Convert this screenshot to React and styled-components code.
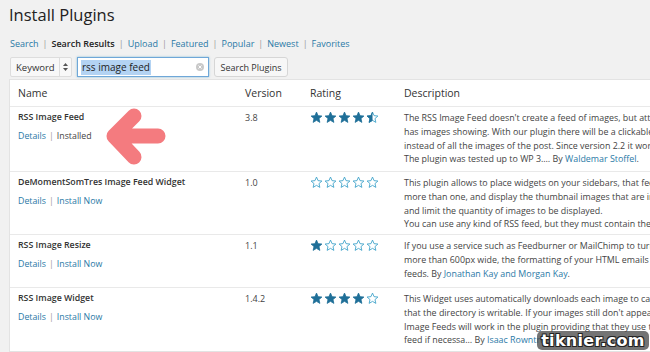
import React from "react";
import styled, { createGlobalStyle } from "styled-components";

const GlobalStyle = createGlobalStyle`
  html, body {
    margin: 0;
    padding: 0;
    background: #f1f1f1;
    overflow: hidden;
  }
  body {
    font-family: "Open Sans", "Liberation Sans", sans-serif;
    color: #444;
  }
`;

const Page = styled.div`
  position: relative;
  width: 650px;
  height: 352px;
  overflow: hidden;
  padding-left: 9px;
  box-sizing: border-box;
`;

const Title = styled.h2`
  margin: 0;
  padding-top: 3px;
  font-size: 16.5px;
  font-weight: 400;
  line-height: 24px;
  color: #222;
`;

const Nav = styled.div`
  display: flex;
  align-items: center;
  margin-top: 10px;
  padding-left: 1px;
  font-size: 9px;
  line-height: 14px;
  white-space: nowrap;
`;

const NavLink = styled.a`
  color: ${(p) => (p.$current ? "#222" : "#2a79a6")};
  font-weight: ${(p) => (p.$current ? 600 : 400)};
  text-decoration: none;
`;

const Sep = styled.span`
  color: #999;
  margin: 0 ${(p) => p.$gap || 4}px;
`;

const SearchRow = styled.div`
  display: flex;
  align-items: center;
  gap: 5px;
  margin-top: 6px;
  padding-left: 1px;
  height: 20px;
`;

const SelectBox = styled.div`
  display: flex;
  align-items: stretch;
  width: 62px;
  height: 20px;
  box-sizing: border-box;
  background: #f8f8f8;
  border: 1px solid #ddd;
  border-radius: 2px;
  font-size: 9.5px;
  color: #333;
`;

const SelectLabel = styled.span`
  flex: 1;
  display: flex;
  align-items: center;
  padding-left: 5px;
`;

const SelectArrows = styled.span`
  width: 11px;
  border-left: 1px solid #ddd;
  display: flex;
  align-items: center;
  justify-content: center;
`;

const InputBox = styled.div`
  display: flex;
  align-items: center;
  width: 132px;
  height: 20px;
  box-sizing: border-box;
  background: #fff;
  border: 1px solid #6fa7d8;
  box-shadow: 0 0 2px rgba(30, 140, 190, 0.5);
  padding: 0 4px 0 3px;
  font-size: 10px;
  color: #222;
`;

const Selected = styled.span`
  background: #b3d3f3;
  padding: 1px 1px;
  line-height: 13px;
`;

const Clear = styled.span`
  margin-left: auto;
  width: 8px;
  height: 8px;
  border-radius: 50%;
  background: #c9c9c9;
  display: flex;
  align-items: center;
  justify-content: center;
`;

const Button = styled.button`
  height: 20px;
  width: 74px;
  padding: 0;
  box-sizing: border-box;
  background: #f7f7f7;
  border: 1px solid #d6d6d6;
  border-radius: 3px;
  font-family: inherit;
  font-size: 9px;
  color: #333;
`;

const Table = styled.div`
  margin-top: 2px;
  width: 720px;
  background: #fff;
  border: 1px solid #e3e3e3;
  border-right: none;
`;

const Row = styled.div`
  position: relative;
  display: grid;
  grid-template-columns: 227px 65px 94px 1fr;
  border-top: ${(p) => (p.$head ? "none" : "1px solid #e9e9e9")};
  height: ${(p) => p.$h}px;
  box-sizing: border-box;
`;

const Cell = styled.div`
  padding: ${(p) => (p.$head ? "6px 8px 0" : "4px 8px 0")};
  font-size: ${(p) => (p.$head ? "10.5px" : "9px")};
  line-height: ${(p) => (p.$head ? "14px" : "13.8px")};
  color: ${(p) => (p.$head ? "#333" : "#444")};
  overflow: hidden;
`;

const PluginName = styled.div`
  font-weight: 600;
  color: #333;
  font-size: 8.8px;
`;

const Actions = styled.div`
  margin-top: 5px;
  font-size: 8.8px;
  color: #444;
`;

const Link = styled.a`
  color: #2a79a6;
  text-decoration: none;
`;

const Stars = styled.div`
  display: flex;
  gap: 1px;
  margin-top: 0;
`;

const DescLine = styled.div`
  white-space: nowrap;
  font-size: 8.9px;
  color: #444;
`;

const Arrow = styled.svg`
  position: absolute;
  left: 91px;
  top: -6px;
`;

const Watermark = styled.div`
  position: absolute;
  left: 537px;
  top: 331px;
  width: 112px;
  height: 19px;
  border-radius: 5px;
  background: rgba(70, 70, 70, 0.75);
  display: flex;
  align-items: center;
  justify-content: center;
  font-family: "DejaVu Sans", sans-serif;
  font-weight: 700;
  font-size: 16px;
  letter-spacing: 0.3px;
  color: #fff;
  text-shadow: 1px 1px 0 #222, -1px -1px 0 #222, 1px -1px 0 #222, -1px 1px 0 #222;
`;

const STAR = "12,2 14.9,8.6 22,9.3 16.6,14 18.2,21 12,17.3 5.8,21 7.4,14 2,9.3 9.1,8.6";

const Star = ({ fill, id }) => (
  <svg width="13" height="13" viewBox="0 0 24 24">
    <defs>
      <clipPath id={id}>
        <rect x="0" y="0" width="12" height="24" />
      </clipPath>
    </defs>
    {fill === 1 ? (
      <polygon points={STAR} fill="#1f6f98" stroke="#1f6f98" strokeWidth="1.5" strokeLinejoin="round" />
    ) : (
      <>
        <polygon points={STAR} fill="none" stroke="#3aa0c9" strokeWidth="1.6" strokeLinejoin="round" />
        {fill === 0.5 && (
          <polygon points={STAR} fill="#1f6f98" stroke="#1f6f98" strokeWidth="1.5" clipPath={`url(#${id})`} />
        )}
      </>
    )}
  </svg>
);

const Rating = ({ value, name }) => (
  <Stars>
    {[0, 1, 2, 3, 4].map((i) => {
      const f = value >= i + 1 ? 1 : value > i ? 0.5 : 0;
      return <Star key={i} fill={f} id={`${name}-${i}`} />;
    })}
  </Stars>
);

const plugins = [
  {
    name: "RSS Image Feed",
    installed: true,
    version: "3.8",
    rating: 4.5,
    h: 65,
    desc: [
      "The RSS Image Feed doesn't create a feed of images, but attaches an image to the feed",
      "has images showing. With our plugin there will be a clickable image in the excerpt",
      "instead of all the images of the post. Since version 2.2 it works also with",
    ],
    by: ["The plugin was tested up to WP 3.… By ", "Waldemar Stoffel", "."],
  },
  {
    name: "DeMomentSomTres Image Feed Widget",
    version: "1.0",
    rating: 0,
    h: 63,
    desc: [
      "This plugin allows to place widgets on your sidebars, that feed images from",
      "more than one, and display the thumbnail images that are in the feed",
      "and limit the quantity of images to be displayed.",
      "You can use any kind of RSS feed, but they must contain the images",
    ],
  },
  {
    name: "RSS Image Resize",
    version: "1.1",
    rating: 1,
    h: 53,
    desc: [
      "If you use a service such as Feedburner or MailChimp to turn your RSS feed",
      "more than 600px wide, the formatting of your HTML emails can break in",
    ],
    by: ["feeds. By ", "Jonathan Kay and Morgan Kay", "."],
  },
  {
    name: "RSS Image Widget",
    version: "1.4.2",
    rating: 4,
    h: 64,
    desc: [
      "This Widget uses automatically downloads each image to cache, so make sure",
      "that the directory is writable. If your images still don't appear, check",
      "Image Feeds will work in the plugin providing that they use the enclosure",
    ],
    by: ["feed if necessa… By ", "Isaac Rowntree", "."],
  },
];

const navItems = ["Search", "Search Results", "Upload", "Featured", "Popular", "Newest", "Favorites"];

export default function App() {
  return (
    <>
      <GlobalStyle />
      <Page>
        <Title>Install Plugins</Title>
        <Nav>
          {navItems.map((item, i) => (
            <React.Fragment key={item}>
              {i > 0 && <Sep>|</Sep>}
              <NavLink href="#" $current={item === "Search Results"}>
                {item}
              </NavLink>
            </React.Fragment>
          ))}
        </Nav>
        <SearchRow>
          <SelectBox>
            <SelectLabel>Keyword</SelectLabel>
            <SelectArrows>
              <svg width="5" height="8" viewBox="0 0 5 8">
                <polygon points="2.5,0 5,3 0,3" fill="#555" />
                <polygon points="0,5 5,5 2.5,8" fill="#555" />
              </svg>
            </SelectArrows>
          </SelectBox>
          <InputBox>
            <Selected>rss image feed</Selected>
            <Clear>
              <svg width="4" height="4" viewBox="0 0 4 4">
                <path d="M0.5 0.5 L3.5 3.5 M3.5 0.5 L0.5 3.5" stroke="#fff" strokeWidth="1" />
              </svg>
            </Clear>
          </InputBox>
          <Button>Search Plugins</Button>
        </SearchRow>
        <Table>
          <Row $head $h={26}>
            <Cell $head>Name</Cell>
            <Cell $head>Version</Cell>
            <Cell $head>Rating</Cell>
            <Cell $head>Description</Cell>
          </Row>
          {plugins.map((p, idx) => (
            <Row key={p.name} $h={p.h}>
              <Cell>
                <PluginName>{p.name}</PluginName>
                <Actions>
                  <Link href="#">Details</Link>
                  <Sep $gap={3}>|</Sep>
                  {p.installed ? "Installed" : <Link href="#">Install Now</Link>}
                </Actions>
              </Cell>
              <Cell>{p.version}</Cell>
              <Cell>
                <Rating value={p.rating} name={`r${idx}`} />
              </Cell>
              <Cell>
                {p.desc.map((line) => (
                  <DescLine key={line}>{line}</DescLine>
                ))}
                {p.by && (
                  <DescLine>
                    {p.by[0]}
                    <Link href="#">{p.by[1]}</Link>
                    {p.by[2]}
                  </DescLine>
                )}
              </Cell>
              {p.installed && (
                <Arrow width="70" height="70" viewBox="0 0 70 70">
                  <path
                    d="M33 15 L13 35 L33 56 M13 35 L57 35"
                    fill="none"
                    stroke="#f47b7f"
                    strokeWidth="15"
                    strokeLinecap="round"
                    strokeLinejoin="round"
                  />
                </Arrow>
              )}
            </Row>
          ))}
        </Table>
        <Watermark>tiknier.com</Watermark>
      </Page>
    </>
  );
}
